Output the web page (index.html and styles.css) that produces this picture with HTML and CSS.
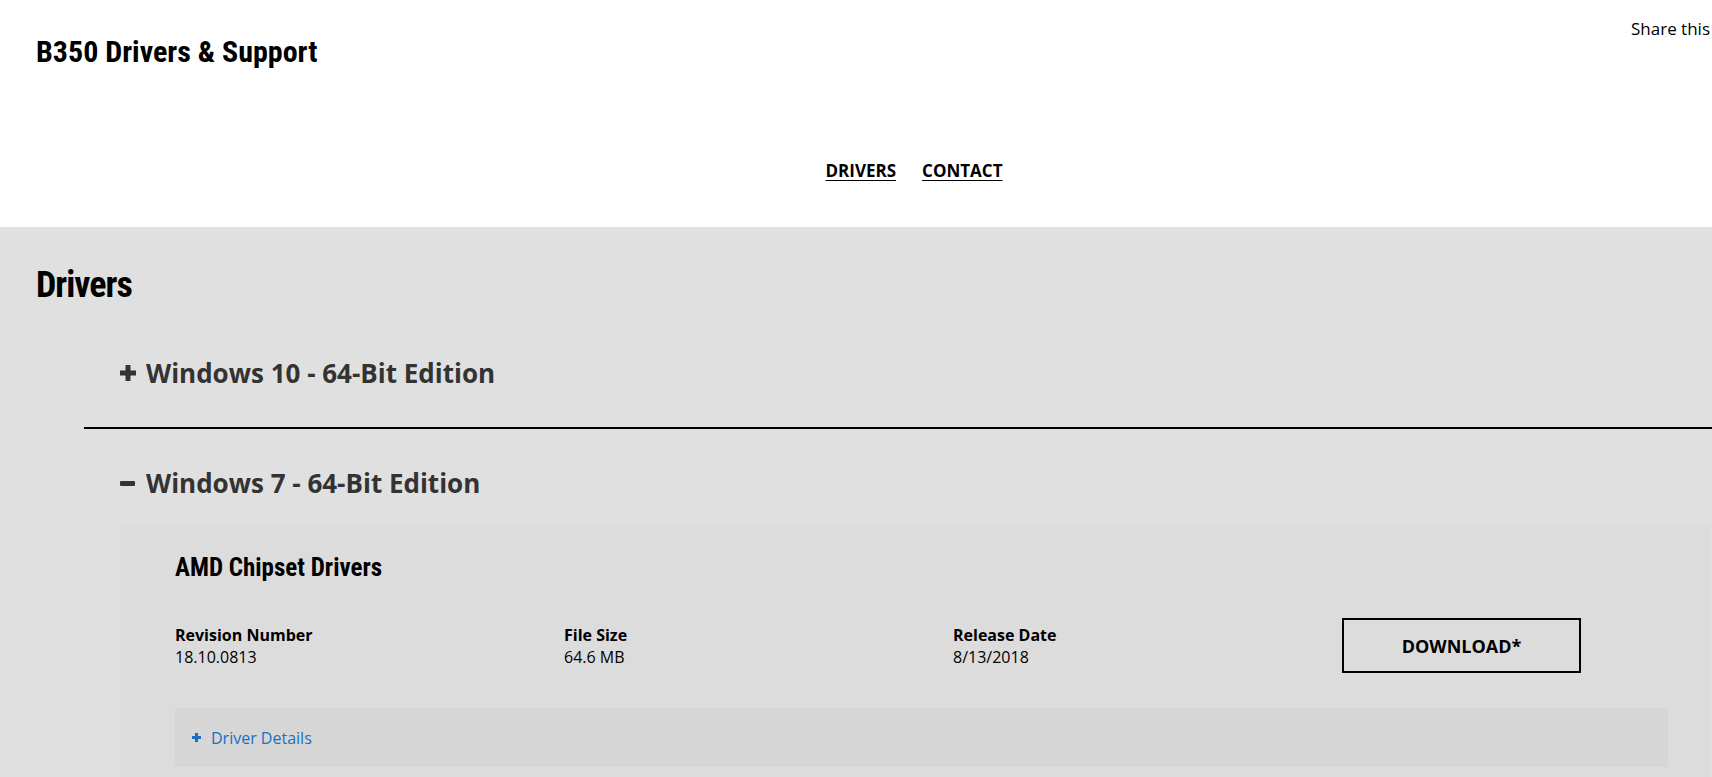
FILE: index.html
```html
<!DOCTYPE html>
<html lang="en">
<head>
    <meta charset="UTF-8">
    <meta name="viewport" content="width=device-width, initial-scale=1.0">
    <title>B350 Drivers &amp; Support</title>
    <link rel="stylesheet" href="styles.css">
</head>
<body>
    <header class="site-header">
        <div class="header-top">
            <h1 class="site-title">B350 Drivers &amp; Support</h1>
            <a class="share-link" href="#">Share this</a>
        </div>
        <nav class="main-nav">
            <a href="#drivers">DRIVERS</a>
            <a href="#contact">CONTACT</a>
        </nav>
    </header>

    <main class="drivers" id="drivers">
        <h2 class="section-title">Drivers</h2>

        <div class="accordion">
            <div class="acc-item">
                <h3 class="acc-head">
                    <svg class="acc-icon" width="16" height="16" viewBox="0 0 16 16">
                        <rect x="0" y="5.5" width="16" height="5" />
                        <rect x="5.5" y="0" width="5" height="16" />
                    </svg>
                    Windows 10 - 64-Bit Edition
                </h3>
            </div>

            <div class="acc-item open">
                <h3 class="acc-head">
                    <svg class="acc-icon" width="16" height="16" viewBox="0 0 16 16">
                        <rect x="0" y="6" width="15" height="5" rx="1" />
                    </svg>
                    Windows 7 - 64-Bit Edition
                </h3>

                <div class="driver-card">
                    <h4 class="driver-name">AMD Chipset Drivers</h4>
                    <div class="driver-info">
                        <div class="info-cell">
                            <span class="info-label">Revision Number</span>
                            <span class="info-value">18.10.0813</span>
                        </div>
                        <div class="info-cell">
                            <span class="info-label">File Size</span>
                            <span class="info-value">64.6 MB</span>
                        </div>
                        <div class="info-cell">
                            <span class="info-label">Release Date</span>
                            <span class="info-value">8/13/2018</span>
                        </div>
                        <div class="info-cell">
                            <a class="download-btn" href="#">DOWNLOAD*</a>
                        </div>
                    </div>
                    <div class="driver-details">
                        <a href="#">
                            <svg width="9" height="9" viewBox="0 0 9 9">
                                <rect x="0" y="3" width="9" height="3" />
                                <rect x="3" y="0" width="3" height="9" />
                            </svg>
                            Driver Details
                        </a>
                    </div>
                </div>
            </div>
        </div>
    </main>
</body>
</html>
```

FILE: styles.css
```css
html, body {
    margin: 0;
    overflow: hidden;
}

body {
    font-family: "Open Sans", Arial, sans-serif;
    color: #000;
    background: #e0e0e0;
}

/* Títulos estrechos */
.site-title,
.section-title,
.driver-name {
    font-family: "Roboto", sans-serif;
    font-stretch: 75%;
    font-weight: bold;
}

/* Cabecera */
.site-header {
    background: #fff;
    height: 227px;
    box-sizing: border-box;
    padding: 0 2px 0 36px;
}

.header-top {
    display: flex;
    justify-content: space-between;
    align-items: flex-start;
}

.site-title {
    margin: 34px 0 0;
    font-size: 30px;
    line-height: 36px;
}

.share-link {
    margin-top: 17px;
    font-size: 17px;
    line-height: 24px;
    color: #000;
    text-decoration: none;
}

.main-nav {
    display: flex;
    justify-content: center;
    gap: 26px;
    padding-left: 82px;
    margin-top: 91px;
}

.main-nav a {
    font-size: 17px;
    line-height: 20px;
    font-weight: bold;
    color: #000;
    text-decoration: underline;
    text-underline-offset: 3px;
}

/* Sección de drivers */
.drivers {
    padding-top: 36px;
}

.section-title {
    margin: 0 0 0 36px;
    font-size: 36px;
    line-height: 44px;
    letter-spacing: -1px;
}

.accordion {
    margin: 12px 0 0 84px;
}

.acc-item {
    border-bottom: 2px solid #000;
}

.acc-item.open {
    border-bottom: none;
}

.acc-head {
    display: flex;
    align-items: center;
    gap: 10px;
    margin: 0;
    padding: 36px 0 36px 36px;
    font-size: 26px;
    line-height: 36px;
    font-weight: bold;
    color: #333;
}

.acc-item.open .acc-head {
    padding-bottom: 24px;
}

.acc-icon {
    fill: #333;
    flex-shrink: 0;
}

/* Tarjeta del driver */
.driver-card {
    margin: 0 2px 0 36px;
    padding: 28px 42px 40px 55px;
    background: #dcdcdc;
}

.driver-name {
    margin: 0;
    font-size: 25px;
    line-height: 30px;
}

.driver-info {
    display: grid;
    grid-template-columns: repeat(4, 1fr);
    column-gap: 63px;
    align-items: center;
    margin-top: 35px;
}

.info-cell {
    display: flex;
    flex-direction: column;
    font-size: 16px;
    line-height: 22px;
}

.info-label {
    font-weight: bold;
}

.download-btn {
    display: flex;
    align-items: center;
    justify-content: center;
    width: 239px;
    height: 55px;
    box-sizing: border-box;
    border: 2px solid #000;
    font-size: 18px;
    font-weight: bold;
    color: #000;
    text-decoration: none;
}

.driver-details {
    margin-top: 35px;
    height: 59px;
    display: flex;
    align-items: center;
    padding-left: 17px;
    background: #d6d6d6;
}

.driver-details a {
    display: flex;
    align-items: center;
    gap: 10px;
    font-size: 16px;
    color: #1a6fc4;
    text-decoration: none;
}

.driver-details svg {
    fill: #1a6fc4;
}
```
